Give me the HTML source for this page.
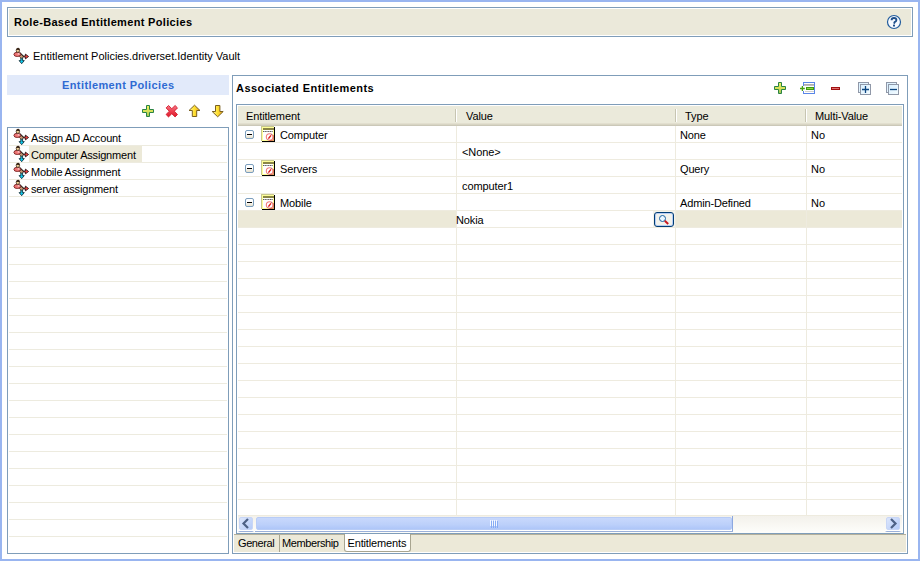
<!DOCTYPE html>
<html><head><meta charset="utf-8">
<style>
*{margin:0;padding:0;box-sizing:border-box}
html,body{width:920px;height:561px;overflow:hidden;background:#fff}
body{font-family:"Liberation Sans",sans-serif;font-size:11px;color:#000;position:relative}
.a{position:absolute}
.t{position:absolute;white-space:nowrap;line-height:13px}
.b{font-weight:bold}
#frame{left:0;top:0;width:920px;height:561px;border:2px solid #99B5F0}
#hdr{left:7px;top:7px;width:906px;height:30px;border:1px solid #7F9DB9;background:#EBE9DA;box-shadow:inset 0 0 0 1px #fff}
#lhdr{left:7px;top:75px;width:222px;height:20px;background:#E2EAFA}
#lbox{left:7px;top:127px;width:222px;height:427px;border:1px solid #7F9DB9}
.lsep{position:absolute;left:9px;width:218px;height:1px;background:#EDEBDF}
#rpan{left:232px;top:75px;width:676px;height:479px;border:1px solid #7F9DB9}
#tbl{left:236px;top:104px;width:668px;height:430px;border:1px solid #7F9DB9}
#thead{left:238px;top:106px;width:664px;height:20px;background:linear-gradient(#EBEADB 0,#EBEADB 17px,#E2DFCF 17px,#E2DFCF 18px,#D8D5C4 18px,#D8D5C4 19px,#CBC8B8 19px)}
.hsep{position:absolute;top:109px;width:2px;height:13px;border-left:1px solid #C7C5B2;background:#fff}
.rsep{position:absolute;left:238px;width:664px;height:1px;background:#EEEBDF}
.csep{position:absolute;top:126px;width:1px;height:389px;background:#EEEBDF}
#tabs{left:234px;top:534px;width:672px;height:18px;background:#ECE9D8;border-top:1px solid #B4B09C}
.mb{width:9px;height:9px;border:1px solid #7B9EBD;border-radius:2px;background:linear-gradient(#fff,#fff 40%,#E6E0CC)}
</style></head><body>
<div id="frame" class="a"></div>
<div id="hdr" class="a"></div>
<div class="t" style="left:14px;top:16px;font-weight:bold;letter-spacing:0.33px">Role-Based Entitlement Policies</div>
<svg class="a" width="16" height="16" viewBox="0 0 16 16" style="left:886px;top:14px">
<circle cx="8" cy="8" r="6.5" fill="#F6FAFF" stroke="#225C9C" stroke-width="1.2"/>
<path d="M5.6 6.2Q5.6 4 8 4Q10.4 4 10.4 6Q10.4 7.4 8.6 8.2L8 9.6" fill="none" stroke="#1E4F8A" stroke-width="1.9"/><rect x="7" y="10.6" width="2" height="1.9" fill="#1E4F8A"/>
</svg>
<svg class="a" width="18" height="20" viewBox="0 0 18 20" style="left:12px;top:46px">
<path d="M7.7 6.6L11 10" stroke="#111" stroke-width="1.3"/>
<path d="M8.8 11.8h1.8v2.8h1.7l-2.6 3.1-2.6-3.1h1.7z" fill="#12CCEE" stroke="#06202a" stroke-width="0.8" stroke-linejoin="round"/>
<path d="M11 10h2.4V8.1l3.2 2.4-3.2 2.4V11H11z" fill="#F44848" stroke="#1a0808" stroke-width="0.8" stroke-linejoin="round"/>
<path d="M9.3 8.6l1.9 1.9-1.9 1.9-1.9-1.9z" fill="#C89C78" stroke="#3a2414" stroke-width="0.7"/>
<ellipse cx="5.3" cy="8.4" rx="3.4" ry="2.1" fill="#F07676" stroke="#6a1414" stroke-width="0.8"/>
<ellipse cx="6.6" cy="7.9" rx="1.1" ry="0.6" fill="#FFE0E0"/>
<ellipse cx="5.9" cy="4.4" rx="1.7" ry="2" fill="#F2D49C" stroke="#3a2618" stroke-width="0.8"/>
<path d="M4.2 3.8q0.4-2.3 2.2-2.1q1.6 0.3 1.3 2.6" fill="#3a2618"/>
</svg>
<div class="t" style="left:33px;top:50px;">Entitlement Policies.driverset.Identity Vault</div>
<div id="lhdr" class="a"></div>
<div class="t" style="left:62px;top:79px;font-weight:bold;color:#2F6AD2;letter-spacing:0.4px">Entitlement Policies</div>
<svg class="a" width="90" height="14" viewBox="0 0 90 14" style="left:141px;top:104px">
<defs>
<linearGradient id="gp" x1="0" y1="0" x2="0" y2="1"><stop offset="0" stop-color="#EEF262"/><stop offset="0.55" stop-color="#D4E058"/><stop offset="1" stop-color="#98C058"/></linearGradient>
<linearGradient id="rx" x1="0" y1="0" x2="0" y2="1"><stop offset="0" stop-color="#F47888"/><stop offset="0.5" stop-color="#EE4050"/><stop offset="1" stop-color="#DC1C2C"/></linearGradient>
<linearGradient id="ya" x1="0" y1="0" x2="1" y2="0"><stop offset="0" stop-color="#FFF8A0"/><stop offset="0.5" stop-color="#FFE030"/><stop offset="1" stop-color="#E8A020"/></linearGradient>
</defs>
<path d="M5.5 1.5h3v4h4v3h-4v4h-3v-4h-4v-3h4z" fill="url(#gp)" stroke="#2A8444" stroke-width="1"/>
<path d="M25.1 3.9l2.4-2.4 3.3 3.2 3.3-3.2 2.4 2.4-3.2 3.3 3.2 3.3-2.4 2.4-3.3-3.2-3.3 3.2-2.4-2.4 3.2-3.3z" fill="url(#rx)" stroke="#D41A2A" stroke-width="0.9"/>
<path d="M53.5 1.2l5.5 5.3h-3.3v6h-4.4v-6h-3.3z" fill="url(#ya)" stroke="#7A6020" stroke-width="1"/>
<path d="M74.5 1.5h4.4v6h3.3l-5.5 5.3-5.5-5.3h3.3z" fill="url(#ya)" stroke="#7A6020" stroke-width="1"/>
</svg>
<div id="lbox" class="a"></div>
<div class="lsep" style="top:145px"></div>
<div class="lsep" style="top:162px"></div>
<div class="lsep" style="top:179px"></div>
<div class="lsep" style="top:196px"></div>
<div class="lsep" style="top:213px"></div>
<div class="lsep" style="top:230px"></div>
<div class="lsep" style="top:247px"></div>
<div class="lsep" style="top:264px"></div>
<div class="lsep" style="top:281px"></div>
<div class="lsep" style="top:298px"></div>
<div class="lsep" style="top:315px"></div>
<div class="lsep" style="top:332px"></div>
<div class="lsep" style="top:349px"></div>
<div class="lsep" style="top:366px"></div>
<div class="lsep" style="top:383px"></div>
<div class="lsep" style="top:400px"></div>
<div class="lsep" style="top:417px"></div>
<div class="lsep" style="top:434px"></div>
<div class="lsep" style="top:451px"></div>
<div class="lsep" style="top:468px"></div>
<div class="lsep" style="top:485px"></div>
<div class="lsep" style="top:502px"></div>
<div class="lsep" style="top:519px"></div>
<div class="lsep" style="top:536px"></div>
<div class="a" style="left:29px;top:146px;width:113px;height:16px;background:#ECE9D8"></div>
<svg class="a" width="18" height="20" viewBox="0 0 18 20" style="left:12px;top:127px">
<path d="M7.7 6.6L11 10" stroke="#111" stroke-width="1.3"/>
<path d="M8.8 11.8h1.8v2.8h1.7l-2.6 3.1-2.6-3.1h1.7z" fill="#12CCEE" stroke="#06202a" stroke-width="0.8" stroke-linejoin="round"/>
<path d="M11 10h2.4V8.1l3.2 2.4-3.2 2.4V11H11z" fill="#F44848" stroke="#1a0808" stroke-width="0.8" stroke-linejoin="round"/>
<path d="M9.3 8.6l1.9 1.9-1.9 1.9-1.9-1.9z" fill="#C89C78" stroke="#3a2414" stroke-width="0.7"/>
<ellipse cx="5.3" cy="8.4" rx="3.4" ry="2.1" fill="#F07676" stroke="#6a1414" stroke-width="0.8"/>
<ellipse cx="6.6" cy="7.9" rx="1.1" ry="0.6" fill="#FFE0E0"/>
<ellipse cx="5.9" cy="4.4" rx="1.7" ry="2" fill="#F2D49C" stroke="#3a2618" stroke-width="0.8"/>
<path d="M4.2 3.8q0.4-2.3 2.2-2.1q1.6 0.3 1.3 2.6" fill="#3a2618"/>
</svg>
<div class="t" style="left:31px;top:132px;letter-spacing:-0.18px">Assign AD Account</div>
<svg class="a" width="18" height="20" viewBox="0 0 18 20" style="left:12px;top:144px">
<path d="M7.7 6.6L11 10" stroke="#111" stroke-width="1.3"/>
<path d="M8.8 11.8h1.8v2.8h1.7l-2.6 3.1-2.6-3.1h1.7z" fill="#12CCEE" stroke="#06202a" stroke-width="0.8" stroke-linejoin="round"/>
<path d="M11 10h2.4V8.1l3.2 2.4-3.2 2.4V11H11z" fill="#F44848" stroke="#1a0808" stroke-width="0.8" stroke-linejoin="round"/>
<path d="M9.3 8.6l1.9 1.9-1.9 1.9-1.9-1.9z" fill="#C89C78" stroke="#3a2414" stroke-width="0.7"/>
<ellipse cx="5.3" cy="8.4" rx="3.4" ry="2.1" fill="#F07676" stroke="#6a1414" stroke-width="0.8"/>
<ellipse cx="6.6" cy="7.9" rx="1.1" ry="0.6" fill="#FFE0E0"/>
<ellipse cx="5.9" cy="4.4" rx="1.7" ry="2" fill="#F2D49C" stroke="#3a2618" stroke-width="0.8"/>
<path d="M4.2 3.8q0.4-2.3 2.2-2.1q1.6 0.3 1.3 2.6" fill="#3a2618"/>
</svg>
<div class="t" style="left:31px;top:149px;letter-spacing:-0.18px">Computer Assignment</div>
<svg class="a" width="18" height="20" viewBox="0 0 18 20" style="left:12px;top:161px">
<path d="M7.7 6.6L11 10" stroke="#111" stroke-width="1.3"/>
<path d="M8.8 11.8h1.8v2.8h1.7l-2.6 3.1-2.6-3.1h1.7z" fill="#12CCEE" stroke="#06202a" stroke-width="0.8" stroke-linejoin="round"/>
<path d="M11 10h2.4V8.1l3.2 2.4-3.2 2.4V11H11z" fill="#F44848" stroke="#1a0808" stroke-width="0.8" stroke-linejoin="round"/>
<path d="M9.3 8.6l1.9 1.9-1.9 1.9-1.9-1.9z" fill="#C89C78" stroke="#3a2414" stroke-width="0.7"/>
<ellipse cx="5.3" cy="8.4" rx="3.4" ry="2.1" fill="#F07676" stroke="#6a1414" stroke-width="0.8"/>
<ellipse cx="6.6" cy="7.9" rx="1.1" ry="0.6" fill="#FFE0E0"/>
<ellipse cx="5.9" cy="4.4" rx="1.7" ry="2" fill="#F2D49C" stroke="#3a2618" stroke-width="0.8"/>
<path d="M4.2 3.8q0.4-2.3 2.2-2.1q1.6 0.3 1.3 2.6" fill="#3a2618"/>
</svg>
<div class="t" style="left:31px;top:166px;letter-spacing:-0.18px">Mobile Assignment</div>
<svg class="a" width="18" height="20" viewBox="0 0 18 20" style="left:12px;top:178px">
<path d="M7.7 6.6L11 10" stroke="#111" stroke-width="1.3"/>
<path d="M8.8 11.8h1.8v2.8h1.7l-2.6 3.1-2.6-3.1h1.7z" fill="#12CCEE" stroke="#06202a" stroke-width="0.8" stroke-linejoin="round"/>
<path d="M11 10h2.4V8.1l3.2 2.4-3.2 2.4V11H11z" fill="#F44848" stroke="#1a0808" stroke-width="0.8" stroke-linejoin="round"/>
<path d="M9.3 8.6l1.9 1.9-1.9 1.9-1.9-1.9z" fill="#C89C78" stroke="#3a2414" stroke-width="0.7"/>
<ellipse cx="5.3" cy="8.4" rx="3.4" ry="2.1" fill="#F07676" stroke="#6a1414" stroke-width="0.8"/>
<ellipse cx="6.6" cy="7.9" rx="1.1" ry="0.6" fill="#FFE0E0"/>
<ellipse cx="5.9" cy="4.4" rx="1.7" ry="2" fill="#F2D49C" stroke="#3a2618" stroke-width="0.8"/>
<path d="M4.2 3.8q0.4-2.3 2.2-2.1q1.6 0.3 1.3 2.6" fill="#3a2618"/>
</svg>
<div class="t" style="left:31px;top:183px;letter-spacing:-0.18px">server assignment</div>
<div id="rpan" class="a"></div>
<div class="t" style="left:236px;top:82px;font-weight:bold;letter-spacing:0.45px">Associated Entitlements</div>
<svg class="a" width="130" height="16" viewBox="0 0 130 16" style="left:772px;top:80px">
<defs>
<linearGradient id="gp2" x1="0" y1="0" x2="0" y2="1"><stop offset="0" stop-color="#EEF262"/><stop offset="0.55" stop-color="#D4E058"/><stop offset="1" stop-color="#98C058"/></linearGradient>
<linearGradient id="lb" x1="0" y1="0" x2="1" y2="1"><stop offset="0" stop-color="#D8F0FF"/><stop offset="1" stop-color="#F4FBFF"/></linearGradient>
</defs>
<path d="M6.5 2.5h3v4h4v3h-4v4h-3v-4h-4v-3h4z" fill="url(#gp2)" stroke="#2A8444" stroke-width="1"/>
<rect x="31.5" y="2.5" width="11" height="11" fill="#fff" stroke="#5A86E8" stroke-width="1"/>
<rect x="30.8" y="6" width="1.6" height="5" fill="#fff"/>
<rect x="32" y="4" width="10" height="1.8" fill="#B0B0AC"/>
<rect x="34" y="7" width="8" height="3" fill="#3E9A10"/>
<rect x="35" y="8" width="6" height="1" fill="#8CD840"/>
<rect x="33" y="11" width="9" height="1" fill="#D4D2CC"/>
<path d="M28 8.5h4.8M30.4 6v4.9" stroke="#44A010" stroke-width="1.3"/>
<rect x="59.5" y="7.5" width="8" height="2" fill="#E07070" stroke="#A01010" stroke-width="1"/>
<rect x="86.5" y="2.5" width="10" height="10" fill="url(#lb)" stroke="#9098A8" stroke-width="1"/>
<rect x="88.5" y="4.5" width="10" height="10" fill="url(#lb)" stroke="#9098A8" stroke-width="1"/>
<path d="M90 9.5h7M93.5 6v7" stroke="#0C4680" stroke-width="1.3"/>
<rect x="114.5" y="2.5" width="10" height="10" fill="url(#lb)" stroke="#9098A8" stroke-width="1"/>
<rect x="116.5" y="4.5" width="10" height="10" fill="url(#lb)" stroke="#9098A8" stroke-width="1"/>
<path d="M118 9.5h7" stroke="#0C4680" stroke-width="1.3"/>
</svg>
<div id="tbl" class="a"></div>
<div id="thead" class="a"></div>
<div class="hsep" style="left:455px"></div>
<div class="hsep" style="left:675px"></div>
<div class="hsep" style="left:805px"></div>
<div class="t" style="left:246px;top:110px;letter-spacing:-0.1px">Entitlement</div>
<div class="t" style="left:466px;top:110px;letter-spacing:-0.1px">Value</div>
<div class="t" style="left:685px;top:110px;letter-spacing:-0.1px">Type</div>
<div class="t" style="left:815px;top:110px;letter-spacing:-0.1px">Multi-Value</div>
<div class="a" style="left:238px;top:211px;width:664px;height:16px;background:#ECE9D8"></div>
<div class="a" style="left:457px;top:211px;width:197px;height:16px;background:#fff"></div>
<div class="a" style="left:653px;top:210px;width:22px;height:18px;background:#F4F2EA"></div>
<div class="rsep" style="top:142px"></div>
<div class="rsep" style="top:159px"></div>
<div class="rsep" style="top:176px"></div>
<div class="rsep" style="top:193px"></div>
<div class="rsep" style="top:210px"></div>
<div class="rsep" style="top:227px"></div>
<div class="rsep" style="top:244px"></div>
<div class="rsep" style="top:261px"></div>
<div class="rsep" style="top:278px"></div>
<div class="rsep" style="top:295px"></div>
<div class="rsep" style="top:312px"></div>
<div class="rsep" style="top:329px"></div>
<div class="rsep" style="top:346px"></div>
<div class="rsep" style="top:363px"></div>
<div class="rsep" style="top:380px"></div>
<div class="rsep" style="top:397px"></div>
<div class="rsep" style="top:414px"></div>
<div class="rsep" style="top:431px"></div>
<div class="rsep" style="top:448px"></div>
<div class="rsep" style="top:465px"></div>
<div class="rsep" style="top:482px"></div>
<div class="rsep" style="top:499px"></div>
<div class="csep" style="left:456px"></div>
<div class="csep" style="left:675px"></div>
<div class="csep" style="left:806px"></div>
<div class="a mb" style="left:245px;top:130px"><div class="a" style="left:1px;top:3px;width:5px;height:1px;background:#000"></div></div>
<svg class="a" width="16" height="17" viewBox="0 0 16 17" style="left:261px;top:126px">
<rect x="1" y="1" width="13" height="15" fill="#000"/>
<rect x="0" y="0" width="13" height="15" fill="#C8C890"/>
<rect x="1" y="1" width="12" height="14" fill="#FFFF98"/>
<rect x="2" y="2" width="10" height="12" fill="#fff"/>
<rect x="2" y="2" width="11" height="2" fill="#8A8646"/>
<path d="M2 5.5h10" stroke="#333" stroke-width="0.8" stroke-dasharray="1.2 0.5"/>
<circle cx="8.6" cy="11" r="3.3" fill="#fff" stroke="#F27C7C" stroke-width="1.1"/>
<path d="M7.4 12.6l2.6-3.2" stroke="#E41818" stroke-width="1.5"/>
<path d="M7 13.4l0.6-0.6M10.2 8.8l0.6-0.6" stroke="#666" stroke-width="0.7"/>
<path d="M12.5 9v5.5h-4" fill="none" stroke="#A00" stroke-width="0.8" opacity="0.5"/>
</svg>
<div class="t" style="left:280px;top:129px;letter-spacing:-0.1px">Computer</div>
<div class="t" style="left:680px;top:129px;letter-spacing:-0.15px">None</div>
<div class="t" style="left:811px;top:129px;">No</div>
<div class="t" style="left:462px;top:146px;letter-spacing:-0.1px">&lt;None&gt;</div>
<div class="a mb" style="left:245px;top:164px"><div class="a" style="left:1px;top:3px;width:5px;height:1px;background:#000"></div></div>
<svg class="a" width="16" height="17" viewBox="0 0 16 17" style="left:261px;top:160px">
<rect x="1" y="1" width="13" height="15" fill="#000"/>
<rect x="0" y="0" width="13" height="15" fill="#C8C890"/>
<rect x="1" y="1" width="12" height="14" fill="#FFFF98"/>
<rect x="2" y="2" width="10" height="12" fill="#fff"/>
<rect x="2" y="2" width="11" height="2" fill="#8A8646"/>
<path d="M2 5.5h10" stroke="#333" stroke-width="0.8" stroke-dasharray="1.2 0.5"/>
<circle cx="8.6" cy="11" r="3.3" fill="#fff" stroke="#F27C7C" stroke-width="1.1"/>
<path d="M7.4 12.6l2.6-3.2" stroke="#E41818" stroke-width="1.5"/>
<path d="M7 13.4l0.6-0.6M10.2 8.8l0.6-0.6" stroke="#666" stroke-width="0.7"/>
<path d="M12.5 9v5.5h-4" fill="none" stroke="#A00" stroke-width="0.8" opacity="0.5"/>
</svg>
<div class="t" style="left:280px;top:163px;letter-spacing:-0.1px">Servers</div>
<div class="t" style="left:680px;top:163px;letter-spacing:-0.15px">Query</div>
<div class="t" style="left:811px;top:163px;">No</div>
<div class="t" style="left:462px;top:180px;letter-spacing:-0.1px">computer1</div>
<div class="a mb" style="left:245px;top:198px"><div class="a" style="left:1px;top:3px;width:5px;height:1px;background:#000"></div></div>
<svg class="a" width="16" height="17" viewBox="0 0 16 17" style="left:261px;top:194px">
<rect x="1" y="1" width="13" height="15" fill="#000"/>
<rect x="0" y="0" width="13" height="15" fill="#C8C890"/>
<rect x="1" y="1" width="12" height="14" fill="#FFFF98"/>
<rect x="2" y="2" width="10" height="12" fill="#fff"/>
<rect x="2" y="2" width="11" height="2" fill="#8A8646"/>
<path d="M2 5.5h10" stroke="#333" stroke-width="0.8" stroke-dasharray="1.2 0.5"/>
<circle cx="8.6" cy="11" r="3.3" fill="#fff" stroke="#F27C7C" stroke-width="1.1"/>
<path d="M7.4 12.6l2.6-3.2" stroke="#E41818" stroke-width="1.5"/>
<path d="M7 13.4l0.6-0.6M10.2 8.8l0.6-0.6" stroke="#666" stroke-width="0.7"/>
<path d="M12.5 9v5.5h-4" fill="none" stroke="#A00" stroke-width="0.8" opacity="0.5"/>
</svg>
<div class="t" style="left:280px;top:197px;letter-spacing:-0.1px">Mobile</div>
<div class="t" style="left:680px;top:197px;letter-spacing:-0.15px">Admin-Defined</div>
<div class="t" style="left:811px;top:197px;">No</div>
<div class="t" style="left:456px;top:214px;letter-spacing:-0.1px">Nokia</div>
<div class="a" style="left:654px;top:212px;width:20px;height:15px;border:1px solid #003C74;border-radius:3px;background:#F2F2EC;box-shadow:inset 0 0 0 1px #B4CCF4"></div>
<svg class="a" width="20" height="15" viewBox="0 0 20 15" style="left:654px;top:212px">
<circle cx="8.5" cy="6.5" r="3" fill="#EAF6FF" stroke="#1860A0" stroke-width="1"/>
<path d="M10.8 8.8l3.4 3.2" stroke="#C81820" stroke-width="2"/>
</svg>
<div class="a" style="left:238px;top:515px;width:664px;height:18px;background:linear-gradient(#EEEBDF 0,#EEEBDF 1px,#F3F1EB 1px,#FDFDFA 17px)"></div>
<div class="a" style="left:239px;top:517px;width:14px;height:13px;border-radius:2px;background:linear-gradient(135deg,#DCE6FC,#B6CCF8);border:1px solid #C8D6F6"></div>
<div class="a" style="left:238px;top:530px;width:16px;height:2px;border-top:1px solid #fff;border-bottom:1px solid #9AB0DA;border-radius:0 0 2px 2px"></div>
<div class="a" style="left:256px;top:517px;width:476px;height:13px;border-radius:2px;background:linear-gradient(#C8D8FC,#BCD0FA 60%,#AEC6F8);border:1px solid #B8CCF6"></div>
<div class="a" style="left:255px;top:530px;width:478px;height:2px;border-top:1px solid #fff;border-bottom:1px solid #9AB0DA"></div>
<div class="a" style="left:732px;top:516px;width:1px;height:15px;background:#8CA8E0"></div>
<svg class="a" width="10" height="8" viewBox="0 0 10 8" style="left:490px;top:520px">
<path d="M0.5 0v6M2.5 0v6M4.5 0v6M6.5 0v6" stroke="#F4F8FF" stroke-width="1"/>
<path d="M1.5 1v7M3.5 1v7M5.5 1v7M7.5 1v7" stroke="#86ACF4" stroke-width="1"/>
</svg>
<div class="a" style="left:886px;top:517px;width:14px;height:13px;border-radius:2px;background:linear-gradient(135deg,#DCE6FC,#B6CCF8);border:1px solid #C8D6F6"></div>
<div class="a" style="left:885px;top:530px;width:16px;height:2px;border-top:1px solid #fff;border-bottom:1px solid #9AB0DA;border-radius:0 0 2px 2px"></div>
<svg class="a" width="16" height="16" viewBox="0 0 16 16" style="left:238px;top:516px">
<path d="M10 3L5.5 7.5 10 12" fill="none" stroke="#4D6185" stroke-width="2.2"/>
</svg>
<svg class="a" width="16" height="16" viewBox="0 0 16 16" style="left:885px;top:516px">
<path d="M6 3l4.5 4.5L6 12" fill="none" stroke="#4D6185" stroke-width="2.2"/>
</svg>
<div id="tabs" class="a"></div>
<div class="a" style="left:279px;top:535px;width:1px;height:17px;background:#A8A590"></div>
<div class="a" style="left:344px;top:534px;width:67px;height:18px;background:#fff;border:1px solid #A8A590;border-top:none;border-radius:0 0 3px 3px"></div>
<div class="t" style="left:238px;top:537px;letter-spacing:-0.4px">General</div>
<div class="t" style="left:282px;top:537px;letter-spacing:-0.4px">Membership</div>
<div class="t" style="left:347.5px;top:537px;letter-spacing:-0.15px">Entitlements</div>
</body></html>
